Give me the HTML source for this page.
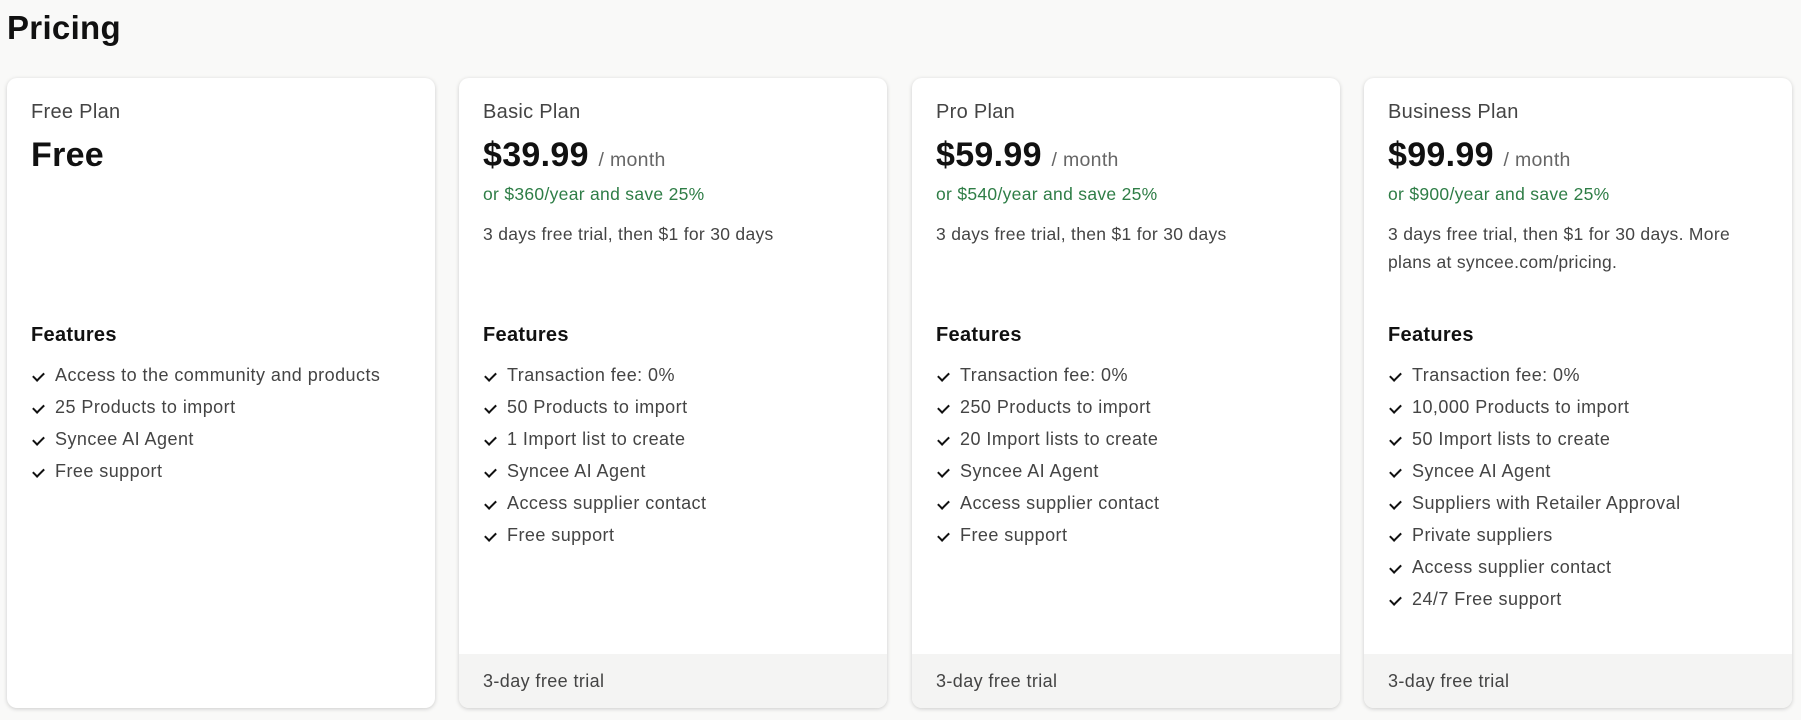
<!DOCTYPE html>
<html><head><meta charset="utf-8"><style>
*{margin:0;padding:0;box-sizing:border-box}
body{width:1801px;height:720px;background:#f9f9f8;font-family:"Liberation Sans",sans-serif;position:relative;overflow:hidden;color:#111}
h1{position:absolute;left:7px;top:8px;font-size:33px;font-weight:700;line-height:40px;color:#111;letter-spacing:0.3px}
.card{position:absolute;top:78px;width:428px;height:630px;background:#fff;border-radius:10px;box-shadow:0 1px 4px rgba(0,0,0,.18);overflow:hidden}
.card>*{position:absolute;left:24px;white-space:nowrap}
.name{top:22px;font-size:20px;line-height:24px;color:#444;letter-spacing:0.3px}
.price{top:59px;font-size:34px;font-weight:700;line-height:36px;color:#111;letter-spacing:0.3px}
.price span{font-size:19.5px;font-weight:400;color:#666}
.green{top:105px;font-size:17.5px;line-height:22px;color:#2e7d46;letter-spacing:0.3px}
.desc{top:142px;font-size:17.5px;line-height:28px;color:#444;white-space:normal;width:404px;letter-spacing:0.3px}
.feat{top:245px;font-size:20px;font-weight:700;line-height:24px;color:#111;letter-spacing:0.3px}
ul{list-style:none;top:281px}
li{height:32px;line-height:32px;font-size:18px;color:#444;position:relative;padding-left:24px;letter-spacing:0.45px}
li:before{content:"";position:absolute;left:4px;top:11px;width:5px;height:9px;border:solid #111;border-width:0 2px 2px 0;transform:rotate(45deg)}
.foot{left:0!important;top:576px;width:100%;height:54px;background:#f4f4f3;font-size:18px;line-height:54px;padding-left:24px;color:#444;letter-spacing:0.4px}
</style></head><body>
<h1>Pricing</h1>
<div class="card" style="left:7px">
<div class="name">Free Plan</div>
<div class="price">Free</div>
<div class="feat">Features</div>
<ul><li>Access to the community and products</li><li>25 Products to import</li><li>Syncee AI Agent</li><li>Free support</li></ul>
</div>
<div class="card" style="left:459px">
<div class="name">Basic Plan</div>
<div class="price">$39.99 <span>/ month</span></div>
<div class="green">or $360/year and save 25%</div>
<div class="desc">3 days free trial, then $1 for 30 days</div>
<div class="feat">Features</div>
<ul><li>Transaction fee: 0%</li><li>50 Products to import</li><li>1 Import list to create</li><li>Syncee AI Agent</li><li>Access supplier contact</li><li>Free support</li></ul>
<div class="foot">3-day free trial</div>
</div>
<div class="card" style="left:912px">
<div class="name">Pro Plan</div>
<div class="price">$59.99 <span>/ month</span></div>
<div class="green">or $540/year and save 25%</div>
<div class="desc">3 days free trial, then $1 for 30 days</div>
<div class="feat">Features</div>
<ul><li>Transaction fee: 0%</li><li>250 Products to import</li><li>20 Import lists to create</li><li>Syncee AI Agent</li><li>Access supplier contact</li><li>Free support</li></ul>
<div class="foot">3-day free trial</div>
</div>
<div class="card" style="left:1364px">
<div class="name">Business Plan</div>
<div class="price">$99.99 <span>/ month</span></div>
<div class="green">or $900/year and save 25%</div>
<div class="desc">3 days free trial, then $1 for 30 days. More<br>plans at syncee.com/pricing.</div>
<div class="feat">Features</div>
<ul><li>Transaction fee: 0%</li><li>10,000 Products to import</li><li>50 Import lists to create</li><li>Syncee AI Agent</li><li>Suppliers with Retailer Approval</li><li>Private suppliers</li><li>Access supplier contact</li><li>24/7 Free support</li></ul>
<div class="foot">3-day free trial</div>
</div>
</body></html>
